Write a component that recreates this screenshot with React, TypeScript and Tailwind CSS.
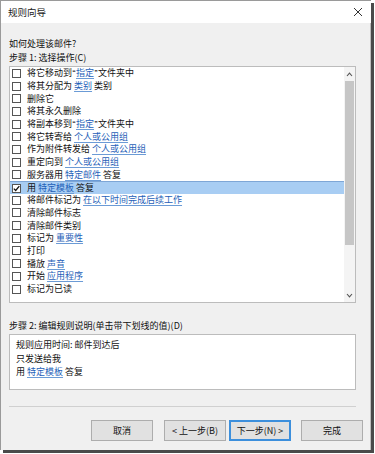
import React from "react";

const font = { fontFamily: '"Noto Sans CJK SC", "Noto Sans", sans-serif' };

type Part = string | { link: string } | { q: string };

const rows: Part[][] = [
  ["将它移动到", { q: "“" }, { link: "指定" }, { q: "”" }, "文件夹中"],
  ["将其分配为 ", { link: "类别" }, " 类别"],
  ["删除它"],
  ["将其永久删除"],
  ["将副本移到", { q: "“" }, { link: "指定" }, { q: "”" }, "文件夹中"],
  ["将它转寄给 ", { link: "个人或公用组" }],
  ["作为附件转发给 ", { link: "个人或公用组" }],
  ["重定向到 ", { link: "个人或公用组" }],
  ["服务器用 ", { link: "特定邮件" }, " 答复"],
  ["用 ", { link: "特定模板" }, " 答复"],
  ["将邮件标记为 ", { link: "在以下时间完成后续工作" }],
  ["清除邮件标志"],
  ["清除邮件类别"],
  ["标记为 ", { link: "重要性" }],
  ["打印"],
  ["播放 ", { link: "声音" }],
  ["开始 ", { link: "应用程序" }],
  ["标记为已读"],
];

function Parts({ parts }: { parts: Part[] }) {
  return (
    <>
      {parts.map((p, i) => {
        if (typeof p === "string")
          return (
            <span key={i} className="inline-block align-top h-[12px] leading-[12px] whitespace-pre">
              {p}
            </span>
          );
        if ("q" in p)
          return (
            <span
              key={i}
              className="inline-block align-top h-[12px] leading-[12px] px-[0.5px]"
              style={{ fontFamily: '"Liberation Sans", sans-serif' }}
            >
              {p.q}
            </span>
          );
        return (
          <span
            key={i}
            className="inline-block align-top h-[12px] leading-[12px] text-[#1f5fb8] underline underline-offset-[2px] decoration-[#6b9bd6]"
          >
            {p.link}
          </span>
        );
      })}
    </>
  );
}

function Btn({ label, focus }: { label: string; focus?: boolean }) {
  return (
    <div
      className={
        "h-[21px] w-[62px] flex items-center justify-center bg-[#e1e1e1] " +
        (focus ? "border-2 border-[#3c8fdc]" : "border border-[#adadad]")
      }
    >
      <span className="inline-block h-[12px] leading-[12px] text-[9px] text-[#111] whitespace-pre">{label}</span>
    </div>
  );
}

export default function App() {
  return (
    <div className="w-[375px] h-[454px] bg-white" style={font}>
      <div className="w-[371px] h-[450px] flex flex-col border-l border-t border-[#9a9a9a] shadow-[3px_3px_0_#4a4a4a] bg-[#f0f0f0]">
        {/* title bar */}
        <div className="h-[22px] bg-white flex items-center justify-between pl-[7px] pr-[6px] shrink-0">
          <span className="inline-block h-[12px] leading-[12px] text-[9.5px] text-[#222]">规则向导</span>
          <svg width="10" height="10" viewBox="0 0 10 10" className="mr-[2px]">
            <path d="M1 1 L9 9 M9 1 L1 9" stroke="#333" strokeWidth="1" />
          </svg>
        </div>
        {/* body */}
        <div className="flex-1 flex flex-col pl-[8px] pr-[14px] border-r border-[#bdbdbd] text-[9px] text-[#111]">
          <div className="h-[12px] mt-[15px] leading-[12px]">
            <span className="inline-block h-[12px] leading-[12px]">如何处理该邮件?</span>
          </div>
          <div className="h-[12px] mt-[2px] leading-[12px]">
            <span className="inline-block h-[12px] leading-[12px]">步骤 1: 选择操作(C)</span>
          </div>
          {/* list */}
          <div className="mt-[2px] h-[237px] bg-white border border-[#bcbcbc] flex">
            <div className="flex-1 flex flex-col">
              {rows.map((r, i) => {
                const sel = i === 9;
                return (
                  <div
                    key={i}
                    className={
                      "h-[12.7px] flex items-center leading-[12px] " +
                      (sel ? "bg-[#a8cdf3] border-t border-[#7ea6d6]" : "")
                    }
                  >
                    <div className="w-[9px] h-[9px] ml-[2px] mr-[6px] border border-[#555] bg-white flex items-center justify-center shrink-0">
                      {sel && (
                        <svg width="7" height="7" viewBox="0 0 7 7">
                          <path d="M0.8 3.6 L2.7 5.5 L6.3 1.2" stroke="#111" strokeWidth="1.3" fill="none" />
                        </svg>
                      )}
                    </div>
                    <div className="whitespace-nowrap h-[12px] flex">
                      <Parts parts={r} />
                    </div>
                  </div>
                );
              })}
            </div>
            {/* scrollbar */}
            <div className="w-[11px] bg-[#f4f4f4] flex flex-col items-center">
              <div className="h-[14px] flex items-center justify-center">
                <svg width="7" height="5" viewBox="0 0 7 5">
                  <path d="M1 4 L3.5 1.2 L6 4" stroke="#555" strokeWidth="1.1" fill="none" />
                </svg>
              </div>
              <div className="w-[9px] h-[164px] bg-[#c6c6c6]" />
              <div className="flex-1" />
              <div className="h-[14px] flex items-center justify-center">
                <svg width="7" height="5" viewBox="0 0 7 5">
                  <path d="M1 1 L3.5 3.8 L6 1" stroke="#555" strokeWidth="1.1" fill="none" />
                </svg>
              </div>
            </div>
          </div>
          <div className="h-[12px] mt-[17px] leading-[12px]">
            <span className="inline-block h-[12px] leading-[12px]">步骤 2: 编辑规则说明(单击带下划线的值)(D)</span>
          </div>
          <div className="mt-[2px] h-[56px] bg-white border border-[#bcbcbc] pl-[6px] pt-[4px] flex flex-col gap-[1.5px] leading-[12px]">
            <div className="h-[12px] flex">
              <Parts parts={["规则应用时间: 邮件到达后"]} />
            </div>
            <div className="h-[12px] flex">
              <Parts parts={["只发送给我"]} />
            </div>
            <div className="h-[12px] flex">
              <Parts parts={["用 ", { link: "特定模板" }, " 答复"]} />
            </div>
          </div>
          <div className="mt-[16px] h-[1px] bg-[#d0d0d0]" />
          <div className="mt-[13px] flex items-center">
            <div className="ml-[82px]">
              <Btn label="取消" />
            </div>
            <div className="ml-[11px]">
              <Btn label="< 上一步(B)" />
            </div>
            <div className="ml-[3px]">
              <Btn label="下一步(N) >" focus />
            </div>
            <div className="ml-[10px]">
              <Btn label="完成" />
            </div>
          </div>
        </div>
      </div>
    </div>
  );
}
